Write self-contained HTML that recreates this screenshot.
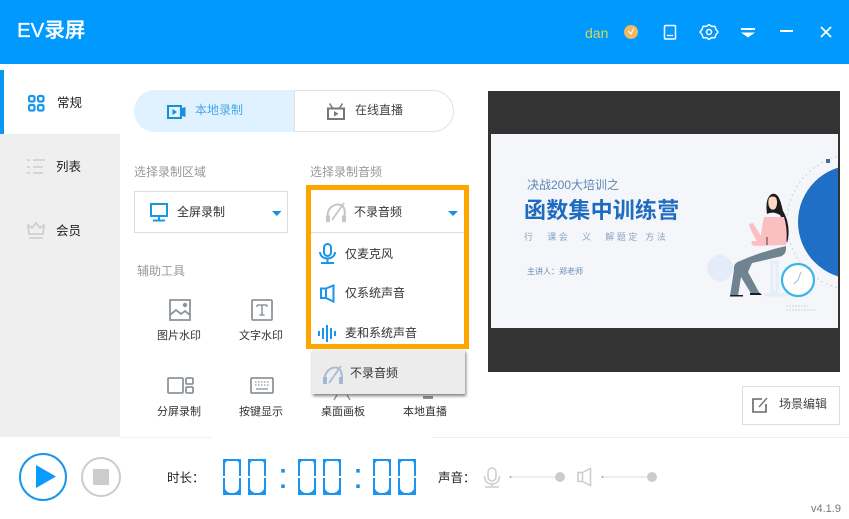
<!DOCTYPE html>
<html lang="zh"><head><meta charset="utf-8"><title>EV录屏</title>
<style>
html,body{margin:0;padding:0}
body{width:849px;height:514px;overflow:hidden;background:#fff;position:relative;font-family:"Liberation Sans","Noto Sans CJK SC",sans-serif;font-size:12px;color:#333}
.a{position:absolute}
.t{position:absolute;white-space:nowrap;line-height:20px;height:20px}
svg{position:absolute;overflow:visible}
.g{color:#999}
.s{font-size:11px;color:#333}
.d{position:absolute;top:459px;width:18px;height:36px;overflow:hidden}
.d b{position:absolute;left:-8px;top:-12px;width:34px;font:400 60px/60px "Liberation Sans",sans-serif;color:#1a96f0;text-align:center}
.d u{position:absolute;left:0;top:0;width:13.500px;height:32px;border:2.250px solid #1a96f0;border-width:2px 2.250px}
.d i{position:absolute;background:#fff;left:0;right:0;top:17px;height:2px}
.c{position:absolute;font:400 36px/36px "Liberation Sans",sans-serif;color:#1a8fe0;top:458px}
</style></head><body>

<div class="a" style="left:0;top:0;width:849px;height:64px;background:#0099fe"></div>
<div class="t" style="left:17px;top:21px;font-size:20.500px;color:#fff;font-weight:500;-webkit-text-stroke:.3px #fff">EV录屏</div>
<div class="t" style="left:585px;top:23px;font-size:14px;color:#dcd65a">dan</div>
<svg style="left:0;top:0" width="849" height="64" fill="none">
<circle cx="631" cy="32" r="7" fill="#f0b768"/><path d="M628 31l3 3 3-6" stroke="#fff" stroke-width="1"/>
<rect x="664.500" y="25.500" width="11" height="13.500" rx="1" stroke="#fff" stroke-width="1.500"/><path d="M667 35.500h6" stroke="#fff" stroke-width="1.300"/>
<path d="M709 24.500l2.500 1.900 3.300-.1 1.200 3.100 2 2.600-2 2.600-1.200 3.100-3.300-.1-2.500 1.900-2.500-1.900-3.300.1-1.200-3.100-2-2.600 2-2.600 1.200-3.100 3.300.1z" stroke="#fff" stroke-width="1.500" stroke-linejoin="round"/><circle cx="709" cy="32" r="2.500" stroke="#fff" stroke-width="1.500"/>
<path d="M741 29h14" stroke="#fff" stroke-width="2"/><path d="M741 32.500h14l-7 5z" fill="#fff"/>
<path d="M780 31h13" stroke="#fff" stroke-width="2"/>
<path d="M821 27l10 10M831 27l-10 10" stroke="#fff" stroke-width="1.800"/>
</svg>

<div class="a" style="left:0;top:134px;width:120px;height:303px;background:#efefef"></div>
<div class="a" style="left:0;top:70px;width:4px;height:64px;background:#0a97f2"></div>
<div class="a" style="left:120px;top:437px;width:92px;height:1px;background:#f2f2f2"></div>
<div class="a" style="left:432px;top:437px;width:417px;height:1px;background:#eee"></div>
<svg style="left:0;top:0" width="120" height="260" fill="none">
<g stroke="#1a96e8" stroke-width="2.200"><rect x="29" y="96" width="5.500" height="5.500" rx="1.500"/><rect x="38" y="96" width="5.500" height="5.500" rx="1.500"/><rect x="29" y="105" width="5.500" height="5.500" rx="1.500"/><rect x="38" y="105" width="5.500" height="5.500" rx="1.500"/></g>
<path d="M27 160h3M33 160h12M27 167h3M33 167h10M27 173h3M33 173h10" stroke="#c8c8c8" stroke-width="1.300"/>
<path d="M29 234l-1-9 4 3 4-5 4 5 4-3-1 9z" stroke="#ccc" stroke-width="1.500"/><path d="M29 238h14" stroke="#ccc" stroke-width="1.500"/>
</svg>
<div class="t" style="left:57px;top:93px;font-size:12.500px;color:#222">常规</div>
<div class="t" style="left:56px;top:157px;font-size:12.500px;color:#222">列表</div>
<div class="t" style="left:56px;top:221px;font-size:12.500px;color:#222">会员</div>

<div class="a" style="left:134px;top:90px;width:160px;height:42px;background:#e0f2ff;border-radius:21px 0 0 21px"></div>
<div class="a" style="left:294px;top:90px;width:158px;height:40px;border:1px solid #e2e2e2;border-radius:0 21px 21px 0"></div>
<svg style="left:0;top:0" width="460" height="130" fill="none">
<rect x="168" y="106" width="13" height="12" stroke="#1a8fd8" stroke-width="2"/><path d="M172.500 109v6l4.500-3z" fill="#1a8fd8"/><path d="M182 108l3.500-1v10l-3.500-1z" fill="#1a8fd8"/>
<rect x="328" y="108.500" width="16" height="10.500" stroke="#777" stroke-width="2"/><path d="M329.500 103.500l3 4.500M342.500 103.500l-3 4.500" stroke="#777" stroke-width="1.500"/><path d="M334 111v5.500l4.500-2.700z" fill="#777"/>
</svg>
<div class="t" style="left:195px;top:100px;color:#4aa5ea">本地录制</div>
<div class="t" style="left:355px;top:100px;color:#444">在线直播</div>

<div class="t g" style="left:134px;top:162px">选择录制区域</div>
<div class="t g" style="left:310px;top:162px">选择录制音频</div>
<div class="a" style="left:134px;top:191px;width:152px;height:40px;border:1px solid #ddd"></div>
<svg style="left:0;top:0" width="300" height="240" fill="none">
<rect x="151" y="204" width="16" height="12" stroke="#1a96e8" stroke-width="2"/><path d="M159 217v3M153 220.500h12" stroke="#1a96e8" stroke-width="2"/>
<path d="M272 211h9.500l-4.750 5z" fill="#1a8fe0"/>
</svg>
<div class="t" style="left:177px;top:202px;color:#333">全屏录制</div>

<div class="t g" style="left:137px;top:261px">辅助工具</div>
<svg style="left:0;top:0" width="460" height="410" fill="none" stroke="#8d959c" stroke-width="1.800">
<rect x="170" y="300" width="20" height="20"/><path d="M170 315l6-5 5 4 4-3 5 4"/><circle cx="185" cy="305" r="1.300" fill="#8d959c"/>
<rect x="252" y="300" width="20" height="20" rx="1"/><path d="M257 305h10M262 305v10M259.500 315h5M257 305v2M267 305v2" stroke-width="1.500"/>
<rect x="168" y="378" width="15" height="15" rx="1"/><rect x="186" y="378" width="7" height="6" rx="1"/><rect x="186" y="387" width="7" height="6" rx="1"/>
<rect x="251" y="378" width="22" height="15" rx="1"/><path d="M255 382h14M255 385h14" stroke-dasharray="1.500 1.500" stroke-width="1.200"/><path d="M256 389h12" stroke-width="1.300"/>
<path d="M337 395l-3 5M347 395l3 5" stroke-width="1.300"/><path d="M423 396h10v3h-10z" fill="#8d959c" stroke="none"/>
</svg>
<div class="t s" style="left:157px;top:326px">图片水印</div>
<div class="t s" style="left:239px;top:326px">文字水印</div>
<div class="t s" style="left:157px;top:402px">分屏录制</div>
<div class="t s" style="left:239px;top:402px">按键显示</div>
<div class="t s" style="left:321px;top:402px">桌面画板</div>
<div class="t s" style="left:403px;top:402px">本地直播</div>

<div class="a" style="left:312px;top:350px;width:153px;height:44px;background:#ececec;box-shadow:1px 2px 3px rgba(0,0,0,.5)"></div>
<div class="a" style="left:306px;top:185px;width:153px;height:153.500px;border:5.500px solid #ffa500;background:#fff"></div>
<div class="a" style="left:311px;top:232px;width:153px;height:1px;background:#ddd"></div>
<svg style="left:0;top:0" width="470" height="400" fill="none">
<path d="M328 218C326 208 334 204.500 338 204.500C344 204.500 346 210 344 218" stroke="#c6c6c6" stroke-width="2"/><path d="M332 220l12-17" stroke="#c6c6c6" stroke-width="1.800"/><rect x="326" y="215.500" width="4" height="6.500" fill="#c6c6c6"/><rect x="342" y="215.500" width="4" height="6.500" fill="#c6c6c6"/>
<path d="M448 211h10l-5 5z" fill="#1a8fe0"/>
<rect x="324" y="244" width="7" height="12" rx="3.500" stroke="#1a96e8" stroke-width="2"/><path d="M320 252c0 4 3.500 6.500 7.500 6.500s7.500-2.500 7.500-6.500M327.500 259v3M321 263h13" stroke="#1a96e8" stroke-width="2"/>
<path d="M321 288.500h5v9.500h-5zM326 288.500l7.500-3v16l-7.500-3.500" stroke="#1a96e8" stroke-width="2"/>
<path d="M319 331v5M323 328v11M327 325v17M331 328v11M335 331v5" stroke="#1a96e8" stroke-width="2"/>
<path d="M325 382C323 372 331 367.500 335 367.500C341 367.500 343 373 341 382" stroke="#a8bdd2" stroke-width="2"/><path d="M329 383l12-17" stroke="#a8bdd2" stroke-width="1.800"/><rect x="323" y="377" width="4" height="7" fill="#a0b8d0"/><rect x="339" y="377" width="4" height="7" fill="#a0b8d0"/>
</svg>
<div class="t" style="left:354px;top:202px;color:#333">不录音频</div>
<div class="t" style="left:345px;top:244px;color:#333">仅麦克风</div>
<div class="t" style="left:345px;top:283px;color:#333">仅系统声音</div>
<div class="t" style="left:345px;top:323px;color:#333">麦和系统声音</div>
<div class="t" style="left:350px;top:363px;color:#333">不录音频</div>

<div class="a" style="left:488px;top:91px;width:352px;height:281px;background:#333"></div>
<div class="a" style="left:491px;top:134px;width:347px;height:194px;background:#f4f6fa;overflow:hidden">
<svg style="left:-491px;top:-134px" width="849" height="372" fill="none">
<circle cx="855" cy="222" r="57" fill="#1f6fc6"/>
<circle cx="855" cy="222" r="68" stroke="#c8d2de" stroke-width="1" stroke-dasharray="2 3"/>
<rect x="826" y="159" width="4" height="4" fill="#3a6ea5"/>
<circle cx="720" cy="268" r="13" fill="#e3ecf8"/>
<path d="M772 262h5v30h-5zM764 295h24" stroke="#e6eff7" stroke-width="3"/>
<path d="M772 194c-6 3-6 12-5 20 4-2 8-2 13 1 4 7 5 20 7 28 3-9 2-22-4-32-2-8-4-19-11-17z" fill="#1c1c1f"/>
<path d="M769 198c2-2 6-2 7 0 2 3 1 9-1 11-2 1-4 1-5-1-2-2-2-7-1-10z" fill="#fbd8c4"/>
<path d="M764 217L784 217Q788 230 786 245L755 246Q750 245 752 241L757 241Q751 232 749 224L753 223L761 236Q762 225 764 217Z" fill="#fbbfc2"/>
<path d="M767 237v8" stroke="#1c1c1f" stroke-width=".8"/>
<path d="M786 246L786 250Q785 256 778 257L752 263L748 272L760 294L752 295L741 277L738 296L730 296L734 270Q733 263 740 261Q760 252 786 246Z" fill="#6f8490"/>
<path d="M730 295h13v1.500h-13zM750 293h10l2 2h-12z" fill="#1c1c1f"/>
<circle cx="798" cy="280" r="16" fill="#fff" stroke="#3cb4ea" stroke-width="2.200"/><path d="M798 280l3-8M798 280l-4 4" stroke="#9db8c8" stroke-width="1"/>
<path d="M786 306h22M786 310h30" stroke="#cfd6de" stroke-width="1" stroke-dasharray="2 1"/>
</svg>
<div class="t" style="left:36px;top:41px;font-size:12px;color:#5d86b6">决战200大培训之</div>
<div class="t" style="left:33px;top:66px;font-size:22px;line-height:22px;font-weight:700;color:#1e6bc0;letter-spacing:.2px">函数集中训练营</div>
<div class="t" style="left:33px;top:93px;font-size:9px;color:#8aa3c4;letter-spacing:2.600px">行　课会　义　解题定 方法</div>
<div class="t" style="left:36px;top:128px;font-size:8px;color:#6b8ab5">主讲人：郑老师</div>
</div>

<div class="a" style="left:742px;top:386px;width:96px;height:37px;border:1px solid #ddd;background:#fff"></div>
<svg style="left:0;top:0" width="849" height="514" fill="none">
<path d="M762 399h-9v13h13v-8" stroke="#666" stroke-width="1.600"/><path d="M759 407l8-9" stroke="#666" stroke-width="1.300"/>
<circle cx="43" cy="477" r="23" stroke="#1a96e8" stroke-width="2"/><path d="M36 465l20 11.500-20 11.500z" fill="#0a9bff"/>
<circle cx="101" cy="477" r="19" stroke="#ccc" stroke-width="2"/><rect x="93" y="469" width="16" height="16" fill="#ccc"/>
<rect x="488" y="468" width="8" height="13" rx="4" stroke="#ccc" stroke-width="1.500"/><path d="M484.500 476c0 5 3 8 7.500 8s7.500-3 7.500-8M492 484v2M485 487h14" stroke="#ccc" stroke-width="1.500"/>
<path d="M510 477h50" stroke="#ddd"/><circle cx="510.500" cy="477" r="1" fill="#6fb4e8"/><circle cx="560" cy="477" r="5" fill="#ccc"/>
<path d="M578 472.500h4.500v9H578zM582.500 472.500l8-4v17l-8-4" stroke="#ccc" stroke-width="1.500"/>
<path d="M602 477h50" stroke="#ddd"/><circle cx="602.500" cy="477" r="1" fill="#6fb4e8"/><circle cx="652" cy="477" r="5" fill="#ccc"/>
</svg>
<div class="t" style="left:779px;top:394px;color:#444">场景编辑</div>

<div class="t" style="left:167px;top:468px;font-size:12.500px;color:#222">时长：</div>
<div class="t" style="left:438px;top:468px;font-size:12.500px;color:#222">声音：</div>
<div class="d" style="left:223px"><b>0</b><u></u><i></i></div>
<div class="d" style="left:248px"><b>0</b><u></u><i></i></div>
<div class="c" style="left:278px">:</div>
<div class="d" style="left:298px"><b>0</b><u></u><i></i></div>
<div class="d" style="left:323px"><b>0</b><u></u><i></i></div>
<div class="c" style="left:353px">:</div>
<div class="d" style="left:373px"><b>0</b><u></u><i></i></div>
<div class="d" style="left:398px"><b>0</b><u></u><i></i></div>
<div class="t" style="left:811px;top:499px;font-size:11px;color:#777">v4.1.9</div>
</body></html>
